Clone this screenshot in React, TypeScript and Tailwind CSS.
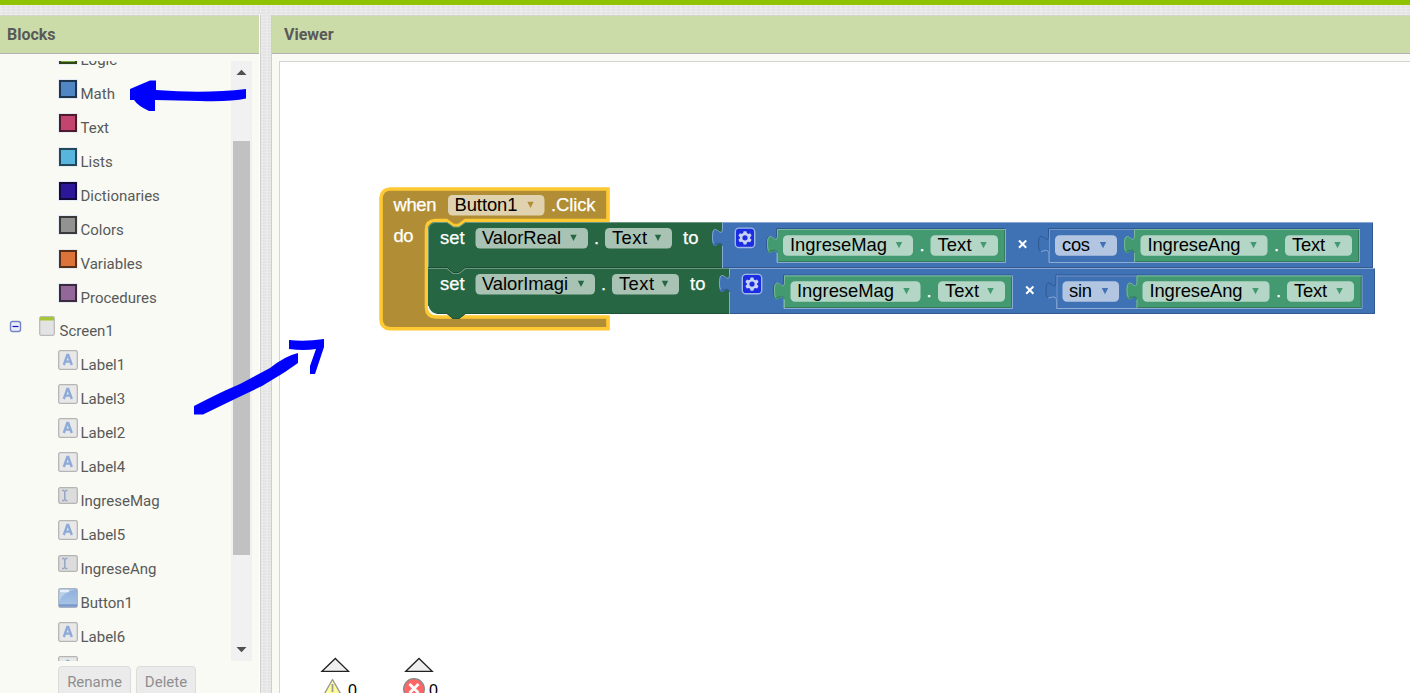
import React from "react";

type FieldProps = { x: number; y: number; w: number; label: string; tx: number; tw: number; ax: number; arrow: string };
const Field = ({ x, y, w, label, tx, tw, ax, arrow }: FieldProps) => (
  <g>
    <rect x={x} y={y} width={w} height={20.5} rx={4.5} fill="#fff" fillOpacity={0.6} />
    <text x={tx} y={Math.round(y + 15.7)} textLength={tw} fill="#000">{label}</text>
    <path d={`M${ax - 3.2} ${y + 6.8}h6.4l-3.2 6.2z`} fill={arrow} />
  </g>
);

const notch = "c0 12.6 -10 -10.1 -10 9.5s10 -3.2 10 9.5";

type BlockProps = { x: number; y: number; r: number; b: number; fill: string; light: string; dark: string };
const Value = ({ x, y, r, b, fill, light, dark }: BlockProps) => (
  <g>
    <path d={`M${x} ${y}v6.3${notch}V${b}H${r}V${y}z`} fill={fill} />
    <path d={`M${x + 0.5} ${b}V${y + 24}M${r} ${y + 0.5}H${x + 0.5}v5.8c0 12.6 -10 -10.1 -10 9.5q0 5 1.5 6`} fill="none" stroke={light} />
    <path d={`M${r - 0.5} ${y + 1}V${b - 0.5}H${x + 1}M${x - 7.5} ${y + 22}c3.500 -0.500 7 -2 7.500 1.500`} fill="none" stroke={dark} />
  </g>
);

const GREEN = { fill: "#439970", light: "#7bb89b", dark: "#357a5a" };
const BLUE = { fill: "#3f71b5", light: "#88a7d2", dark: "#325a91" };

const Socket = ({ x, y, r, b }: { x: number; y: number; r: number; b: number }) => (
  <g fill="none">
    <path d={`M${r} ${y - 0.5}H${x - 0.5}v6.8c0 12.6 -10 -10.1 -10 9.5q0 5 1.500 6.500`} stroke="#2f5790" />
    <path d={`M${x - 8} ${y + 22.5}c4 -1 8 -2.500 8 3V${b + 0.5}H${r + 0.5}V${y}`} stroke="#8caad3" />
    <path d={`M${x + 0.5} ${y}V${b}M${x} ${y + 0.5}H${r}`} stroke="#6f95cb" />
  </g>
);

const Gear = ({ x, y }: { x: number; y: number }) => (
  <g>
    <rect x={x + 0.8} y={y + 0.8} width={19.4} height={19.4} rx={3.6} fill="#1a2de0" stroke="#9fb8e8" strokeWidth={1.4} />
    <g transform={`translate(${x + 10.5} ${y + 10.5})`} fill="#c8d3f5">
      <path fillRule="evenodd" d="M-1.4 -6.6h2.800l.5 1.900 1.300 .8 2-.6 1.400 2.500-1.500 1.300v1.400l1.500 1.300-1.400 2.500-2-.6-1.300.8-.5 1.900h-2.800l-.5-1.900-1.300-.8-2 .6-1.400-2.500 1.500-1.300v-1.400l-1.500-1.300 1.400-2.500 2 .6 1.300-.8zM0-2.600a2.600 2.600 0 1 0 0 5.200a2.600 2.600 0 0 0 0-5.200z" />
    </g>
  </g>
);

const W = ({ x, y, w, children }: { x: number; y: number; w?: number; children: string }) => (
  <text x={x} y={y} textLength={w} fill="#fff" stroke="#fff" strokeWidth={0.25}>{children}</text>
);

const Blocks = () => (
  <svg className="block h-[631px] w-[1130px]" viewBox="280 62 1130 631" fontFamily="'Liberation Sans', Arial, sans-serif" fontSize="18.4">
    <path d="M390 189H608V220.500H465.500L459 225.500H453L446.500 220.500H435Q426.500 221 426.500 229.500V308Q427 317 436 317H608V328.800H390Q381 328 381 319V198Q381.500 189.500 390 189z" fill="#b18e35" stroke="#ffc933" strokeWidth={3.6} />
    <W x={393.500} y={211} w={43}>when</W>
    <Field x={448} y={195} w={96.500} label="Button1" tx={454.500} tw={63} ax={530.500} arrow="#b18e35" />
    <W x={551} y={211} w={44.500}>.Click</W>
    <W x={393.500} y={242} w={20}>do</W>

    <path d="M436 222H447L453.500 227H459L465.500 222H722V268H465.500L459 273H453L447 268H428V230Q428 222 436 222z" fill="#266643" />
    <path d="M428.500 268V230Q429 222.500 436 222.500H447L453.500 227H459L465.500 222.500H722" fill="none" stroke="#6a9880" />
    <path d="M428 268.500H447L453 273.500H459L465.500 268.500H729V314H465.500L459 319H453L447 314H437Q428 314 428 305z" fill="#266643" />
    <path d="M428 267.500H447L453 272.500H459L465.500 267.500H722" fill="none" stroke="#1c4c32" />
    <path d="M428 268.500H447L453 273.500H459L465.500 268.500H729" fill="none" stroke="#6a9880" />
    <path d="M428 306Q428 314.500 437 314.500Q430.500 313 428 306z" fill="#fff" stroke="#fff" strokeWidth={0.700} />
    <path d="M437 313.500H447L453 318.500H459L465.500 313.500H729" fill="none" stroke="#1f5537" />

    <W x={440} y={244} w={24.500}>set</W>
    <Field x={475.500} y={228} w={112.500} label="ValorReal" tx={482} tw={79} ax={573.500} arrow="#266643" />
    <W x={594} y={244}>.</W>
    <Field x={605} y={228} w={67} label="Text" tx={612} tw={35} ax={658} arrow="#266643" />
    <W x={683} y={244} w={15.500}>to</W>
    <W x={440} y={290} w={24.500}>set</W>
    <Field x={475.500} y={274} w={119.500} label="ValorImagi" tx={482} tw={86} ax={581} arrow="#266643" />
    <W x={601} y={290}>.</W>
    <Field x={612} y={274} w={67} label="Text" tx={619} tw={35} ax={665} arrow="#266643" />
    <W x={690} y={290} w={15.500}>to</W>

    <Value x={722} y={222} r={1373} b={268} {...BLUE} />
    <Value x={729} y={268} r={1375} b={314} {...BLUE} />
    <Gear x={734.500} y={227.300} />
    <Gear x={741.500} y={273.600} />

    <Socket x={777} y={229} r={1005} b={262} />
    <Value x={777} y={229} r={1005} b={262} {...GREEN} />
    <Field x={783} y={235.200} w={130} label="IngreseMag" tx={790} tw={97} ax={899} arrow="#439970" />
    <W x={919.500} y={251}>.</W>
    <Field x={930.500} y={235.200} w={67.500} label="Text" tx={937.500} tw={34} ax={983.500} arrow="#439970" />
    <path d="M1019 240.500l7.200 7.200M1026.200 240.500l-7.200 7.200" stroke="#fff" strokeWidth={2} />
    <Socket x={1049} y={229} r={1359} b={262} />
    <Field x={1055} y={235.200} w={62} label="cos" tx={1062} tw={28} ax={1103} arrow="#3f71b5" />
    <Value x={1134} y={229} r={1359} b={262} {...GREEN} />
    <Field x={1140.500} y={235.200} w={127} label="IngreseAng" tx={1147.500} tw={93} ax={1253.500} arrow="#439970" />
    <W x={1274} y={251}>.</W>
    <Field x={1285} y={235.200} w={67} label="Text" tx={1292} tw={33} ax={1337.500} arrow="#439970" />

    <Socket x={784} y={275.500} r={1012} b={308} />
    <Value x={784} y={275.500} r={1012} b={308} {...GREEN} />
    <Field x={790.500} y={281.200} w={130} label="IngreseMag" tx={797} tw={97} ax={906.500} arrow="#439970" />
    <W x={926.500} y={297}>.</W>
    <Field x={938} y={281.200} w={67} label="Text" tx={945} tw={34} ax={990.500} arrow="#439970" />
    <path d="M1026.200 286.500l7.200 7.200M1033.400 286.500l-7.200 7.200" stroke="#fff" strokeWidth={2} />
    <Socket x={1056.500} y={275.500} r={1361.500} b={308} />
    <Field x={1062.500} y={281.200} w={56.500} label="sin" tx={1069} tw={23} ax={1105} arrow="#3f71b5" />
    <Value x={1136.500} y={275.500} r={1361.500} b={308} {...GREEN} />
    <Field x={1142.500} y={281.200} w={127} label="IngreseAng" tx={1149.500} tw={93} ax={1255.500} arrow="#439970" />
    <W x={1276} y={297}>.</W>
    <Field x={1287} y={281.200} w={67} label="Text" tx={1294} tw={33} ax={1339.500} arrow="#439970" />

    <path d="M322 671.300L335.300 658.500L348.500 671.300zM405.800 671.300L419 658.500L432.200 671.300z" fill="#eee" stroke="#222" strokeWidth={1.300} />
    <path d="M332.500 679.500L343 698H322z" fill="#ff9" stroke="#999" strokeWidth={1.400} strokeLinejoin="round" />
    <path d="M332.500 684v8" stroke="#999" strokeWidth={1.800} />
    <circle cx={414} cy={689} r={10.300} fill="#f66" stroke="#888" strokeWidth={1.300} />
    <path d="M409.500 684l9 9M418.500 684l-9 9" stroke="#fff" strokeWidth={2.800} />
    <text x={348} y={696} fontSize="16" fill="#000">0</text>
    <text x={429} y={696} fontSize="16" fill="#000">0</text>
  </svg>
);

const Frame = ({ children }: { children: React.ReactNode }) => (
  <svg className="size-5 shrink-0" viewBox="0 0 20 20">{children}</svg>
);

const LabelIcon = () => (
  <Frame>
    <rect x="0.700" y="0.700" width="18.600" height="18.600" rx="1.500" fill="#e8e8e8" stroke="#b5b5b5" strokeWidth="1.300" />
    <path d="M5.800 15L9.300 5H10.200L13.800 15M7.200 11.600h5.200" fill="none" stroke="#8eabd8" strokeWidth="2.400" />
  </Frame>
);
const TextBoxIcon = () => (
  <Frame>
    <rect x="0.700" y="1.700" width="18.600" height="15.600" rx="1.500" fill="#dcdcdc" stroke="#b5b5b5" strokeWidth="1.300" />
    <path d="M4 4.500h2.200M7.300 4.500h2.200M4 14.500h2.200M7.300 14.500h2.200M6.800 4.500v10" stroke="#93a5c4" strokeWidth="1.500" />
  </Frame>
);
const ButtonIcon = () => (
  <Frame>
    <defs>
      <linearGradient id="bt" x1="0" y1="0" x2="0" y2="1"><stop offset="0" stopColor="#8fb0dc" /><stop offset="1" stopColor="#abc5e6" /></linearGradient>
    </defs>
    <rect x="0.700" y="0.700" width="18.600" height="18.600" rx="1.500" fill="url(#bt)" stroke="#a9b3c2" strokeWidth="1.200" />
    <path d="M1.300 13V1.500H18Q6 3 1.300 13z" fill="#b9cfea" />
    <path d="M2 3h9" stroke="#e6eef8" strokeWidth="2.500" />
    <path d="M1 17.500h18" stroke="#7997c8" strokeWidth="2.400" />
  </Frame>
);
const Swatch = ({ className }: { className: string }) => (
  <div className={`ml-px h-[18px] w-[18px] shrink-0 border-2 border-black/60 bg-clip-border outline outline-[#e6ecf6] ${className}`} />
);

const drawers = [
  { label: "Logic", color: "bg-[#77ab41]" },
  { label: "Math", color: "bg-[#4f86c3]" },
  { label: "Text", color: "bg-[#c3446f]" },
  { label: "Lists", color: "bg-[#58b5dd]" },
  { label: "Dictionaries", color: "bg-[#2d1799]" },
  { label: "Colors", color: "bg-[#929292]" },
  { label: "Variables", color: "bg-[#dc743a]" },
  { label: "Procedures", color: "bg-[#936899]" },
];
const components = [
  { label: "Label1", icon: <LabelIcon /> },
  { label: "Label3", icon: <LabelIcon /> },
  { label: "Label2", icon: <LabelIcon /> },
  { label: "Label4", icon: <LabelIcon /> },
  { label: "IngreseMag", icon: <TextBoxIcon /> },
  { label: "Label5", icon: <LabelIcon /> },
  { label: "IngreseAng", icon: <TextBoxIcon /> },
  { label: "Button1", icon: <ButtonIcon /> },
  { label: "Label6", icon: <LabelIcon /> },
  { label: "", icon: <LabelIcon /> },
];

const texture =
  "bg-[#e4e4e4] bg-[repeating-linear-gradient(0deg,rgba(255,255,255,0.22)_0_1px,transparent_1px_3px),repeating-linear-gradient(90deg,rgba(255,255,255,0.15)_0_2px,transparent_2px_5px)]";

export default function App() {
  return (
    <div className="relative flex h-[693px] w-[1410px] flex-col overflow-hidden bg-[#f8faf3] font-[Roboto,sans-serif] text-[15px] text-[#595959]">
      <div className="h-[5px] shrink-0 bg-[#8fc202]" />
      <div className={`h-[10px] shrink-0 ${texture}`} />
      <div className="flex min-h-0 flex-1">
        <aside className="flex w-[260px] shrink-0 flex-col border-r border-white">
          <h2 className="h-[39px] shrink-0 border-t border-b border-t-[#d3d7c8] border-b-[#b3b3b3] bg-[#ccdca9] pl-[7px] text-[16px] leading-[37px] font-bold">Blocks</h2>
          <div className="mt-[7px] flex h-[600px] shrink-0 overflow-hidden">
            <div className="w-[231px] shrink-0">
              <div className="-mt-[15px]">
                {drawers.map((r) => (
                  <div key={r.label} className="flex h-[34px] items-start pl-[58px]">
                    <Swatch className={r.color} />
                    <span className="mt-1 ml-[3.500px] leading-[20px]">{r.label}</span>
                  </div>
                ))}
                <div className="-mt-[2px] flex h-[34px] items-start pl-[9px]">
                  <svg className="mt-[4px] h-[13px] w-[13px]" viewBox="0 0 13 13">
                    <rect x="1.500" y="1.500" width="10" height="10" rx="2" fill="#e9edf8" stroke="#7385c4" strokeWidth="1.400" />
                    <path d="M3.500 6.500h6" stroke="#1512c8" strokeWidth="1.200" />
                  </svg>
                  <svg className="ml-[17px] h-[20px] w-4" viewBox="0 0 16 20">
                    <rect x="0.700" y="0.700" width="14.600" height="18.600" rx="1.500" fill="#e3e3e3" stroke="#bbb" strokeWidth="1.300" />
                    <path d="M1 1h14v3.500H1z" fill="#a5c63a" />
                  </svg>
                  <span className="mt-[5px] ml-[4.500px] leading-[20px]">Screen1</span>
                </div>
                {components.map((r, i) => (
                  <div key={i} className="flex h-[34px] items-start pl-[58px]">
                    {r.icon}
                    <span className="mt-[5px] ml-[2.500px] leading-[20px]">{r.label}</span>
                  </div>
                ))}
              </div>
            </div>
            <div className="flex w-[21px] flex-col items-center bg-[#f1f1f1]">
              <svg className="h-[80px] w-[21px] shrink-0" viewBox="0 0 21 80"><path d="M5.500 14L10.500 8.800L15.500 14z" fill="#505050" /></svg>
              <div className="h-[414px] w-[17px] shrink-0 bg-[#c1c1c1]" />
              <svg className="h-[106px] w-[21px] shrink-0" viewBox="0 0 21 106"><path d="M5.500 92L10.500 97.200L15.500 92z" fill="#505050" /></svg>
            </div>
          </div>
          <div className="flex gap-[5px] pt-[5px] pl-[58px] text-[#8f8f8f]">
            <button className="h-[32px] w-[73px] shrink-0 rounded border border-[#dcdcdc] bg-[#ebebeb]">Rename</button>
            <button className="h-[32px] w-[60px] shrink-0 rounded border border-[#dcdcdc] bg-[#ebebeb]">Delete</button>
          </div>
        </aside>
        <div className={`w-[12px] shrink-0 border-x border-[#cfcfcf] ${texture}`} />
        <main className="flex min-w-0 flex-1 flex-col">
          <h2 className="h-[39px] shrink-0 border-t border-b border-t-[#d3d7c8] border-b-[#b3b3b3] bg-[#ccdca9] pl-3 text-[16px] leading-[37px] font-bold">Viewer</h2>
          <div className="mt-[7px] ml-[7px] min-h-0 flex-1 overflow-hidden border-t border-l border-[#d5d5d5] bg-white">
            <Blocks />
          </div>
        </main>
      </div>
      <svg className="pointer-events-none absolute inset-0 h-[693px] w-[1410px]" viewBox="0 0 1410 693">
        <path d="M130 89L150 80.500H156V90Q205 94 246 89V98.500Q230 102 200 101L155 100V111H149Q138 106 134 100H130z" fill="#00f" />
        <path d="M194 406Q225 390 240 384L270 368Q285 356 298 353V363L285 372L262 386L237 398L203 414.500H194z" fill="#00f" />
        <path d="M289 340Q305 342 324 339V347L315 374H310V366L316 349Q304 351 289 349z" fill="#00f" />
      </svg>
    </div>
  );
}
